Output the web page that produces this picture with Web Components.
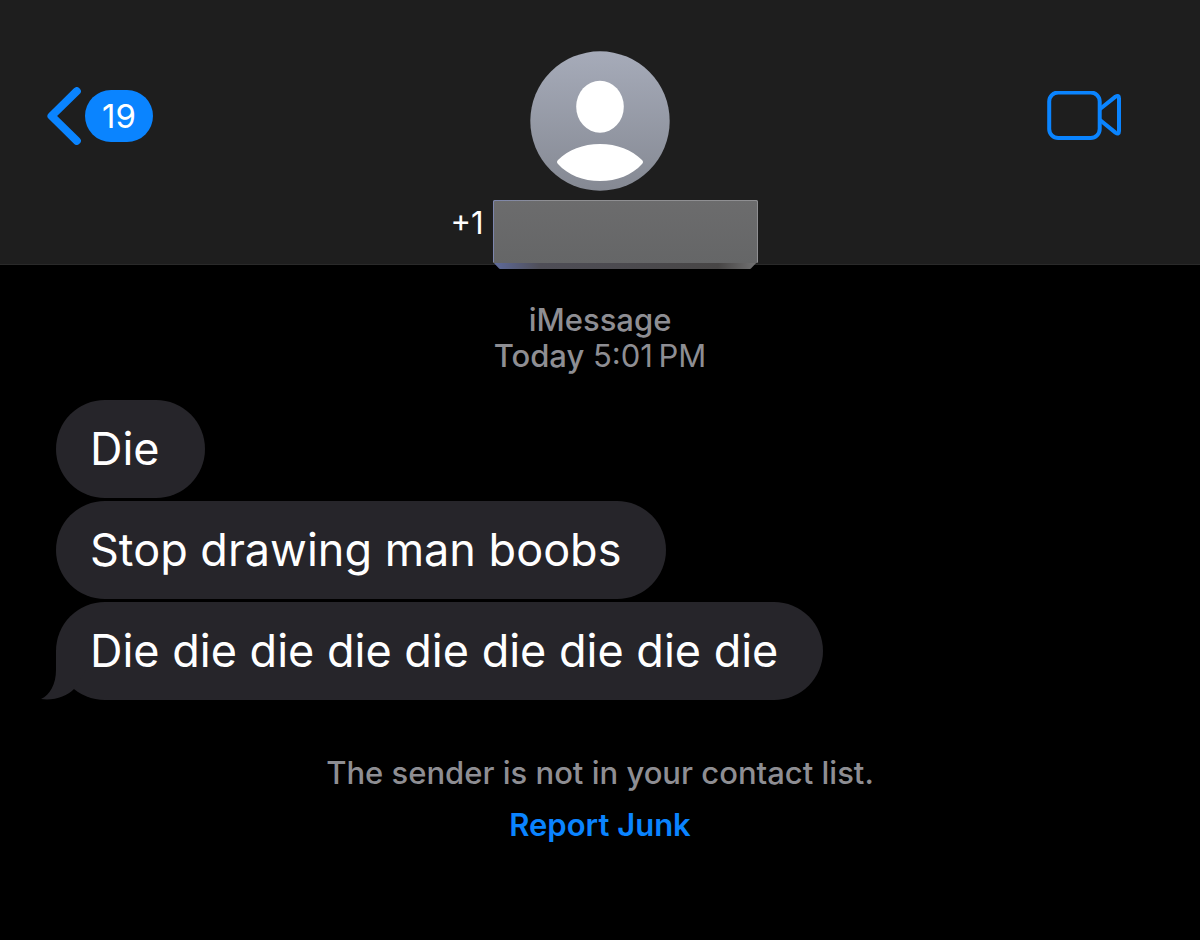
<!DOCTYPE html>
<html lang="en">
<head>
<meta charset="utf-8">
<meta name="viewport" content="width=device-width, initial-scale=1">
<title>Messages</title>
<style>
body {
  margin: 0;
  min-height: 100vh;
  background: #000;
  color: #fff;
  font-family: Inter, "Liberation Sans", sans-serif;
  --blue: #0a84ff;
  --grey: #8e8e93;
  --bubble: #26252a;
}
</style>
</head>
<body>

<chat-header count="19">+1</chat-header>
<main>
  <chat-thread>
    <chat-stamp slot="stamp" service="iMessage" day="Today">5:01&thinsp;PM</chat-stamp>
    <chat-bubble>Die</chat-bubble>
    <chat-bubble>Stop drawing man boobs</chat-bubble>
    <chat-bubble last>Die die die die die die die die die</chat-bubble>
  </chat-thread>
  <junk-notice>The sender is not in your contact list.</junk-notice>
</main>

<script>
function makeTemplate(html) {
  const template = document.createElement('template');
  template.innerHTML = html;
  return template;
}

const headerTemplate = makeTemplate(`
<style>
:host {
  display: block;
}
header {
  display: grid;
  grid-template-columns: 1fr auto 1fr;
  align-items: start;
  padding: 51px 78px 0 47px;
  background: #1e1e1e;
  border-bottom: 1px solid #2a2a2a;
}
button {
  display: flex;
  align-items: center;
  height: 58px;
  margin-top: 36px;
  padding: 0;
  border: none;
  background: none;
  font: inherit;
  color: inherit;
  cursor: pointer;
}
svg {
  display: block;
}
.back {
  gap: 4px;
}
.video {
  justify-self: end;
}
.badge {
  min-width: 68px;
  border-radius: 26px;
  background: var(--blue);
  font-size: 33px;
  line-height: 52px;
  text-align: center;
}
.contact {
  display: flex;
  flex-direction: column;
  align-items: center;
  gap: 8px;
  margin-left: 31px;
}
.number {
  display: flex;
  align-items: start;
  gap: 8px;
  padding-left: 8px;
  font-size: 31px;
  line-height: 48px;
}
/* the cover hangs a little over the edge of the header */
.cover {
  margin-bottom: -5px;
}
</style>

<header>
  <button class="back" aria-label="Back">
    <svg width="34" height="58" viewBox="0 0 34 58" fill="none" stroke="#0a84ff" stroke-width="8" stroke-linecap="round" stroke-linejoin="round">
      <path d="M29.800 4.200L4.500 29L29.800 53.800"/>
    </svg>
    <span class="badge"></span>
  </button>
  <div class="contact">
    <svg width="140" height="140" viewBox="0 0 140 140">
      <defs>
        <linearGradient id="sky" x1="0" y1="0" x2="0" y2="1">
          <stop offset="0" stop-color="#a6abb9"/>
          <stop offset="1" stop-color="#858993"/>
        </linearGradient>
      </defs>
      <circle cx="70" cy="70" r="69.7" fill="url(#sky)"/>
      <ellipse cx="70" cy="55.7" rx="23.8" ry="26" fill="#fff"/>
      <path d="M28 109C38 99 53 93 70 93S102 99 112 109Q114 111 112 113C102 124 87 130 70 130S38 124 28 113Q26 111 28 109Z" fill="#fff"/>
    </svg>
    <div class="number">
      <slot></slot>
      <svg class="cover" width="266" height="70" viewBox="0 0 266 70">
        <defs>
          <linearGradient id="face" x1="0" y1="0" x2="0" y2="1">
            <stop offset="0" stop-color="#6c6c6d"/>
            <stop offset="1" stop-color="#656667"/>
          </linearGradient>
          <linearGradient id="lip" x1="0" y1="0" x2="1" y2="0">
            <stop offset="0" stop-color="#5f6b9c"/>
            <stop offset="0.18" stop-color="#4f4e57"/>
            <stop offset="0.85" stop-color="#484646"/>
            <stop offset="1" stop-color="#747475"/>
          </linearGradient>
          <linearGradient id="rim" x1="0" y1="0" x2="1" y2="0">
            <stop offset="0" stop-color="#7d86ae"/>
            <stop offset="0.2" stop-color="#8f8f92"/>
            <stop offset="1" stop-color="#8f8f92"/>
          </linearGradient>
        </defs>
        <path d="M3 1H264Q266 1 266 3V62L259 69.500Q258 70 257 70H9Q8 70 7 69.500L1 63V3Q1 1 3 1Z" fill="url(#lip)"/>
        <path d="M3 1H264Q266 1 266 3V64H1V3Q1 1 3 1Z" fill="url(#face)"/>
        <path d="M1.500 63V3Q1.500 1.500 3 1.500H264Q265.500 1.500 265.500 3V63" fill="none" stroke="url(#rim)"/>
      </svg>
    </div>
  </div>
  <button class="video" aria-label="Video call">
    <svg width="75" height="50" viewBox="0 1 75 50" fill="none" stroke="#0a84ff" stroke-width="4" stroke-linejoin="round">
      <rect x="2.2" y="2.5" width="50.500" height="45.500" rx="9"/>
      <path d="M53 19L68.5 6.6Q72 4.5 72 8.5V41Q72 45 68.5 42.600L53 30"/>
    </svg>
  </button>
</header>
`);

class ChatHeader extends HTMLElement {
  constructor() {
    super();
    this.attachShadow({ mode: 'open' }).appendChild(headerTemplate.content.cloneNode(true));
  }

  connectedCallback() {
    this.shadowRoot.querySelector('.badge').textContent = this.getAttribute('count');
  }
}

const threadTemplate = makeTemplate(`
<style>
:host {
  display: block;
  padding: 37px 56px 0;
}
.bubbles {
  display: flex;
  flex-direction: column;
  align-items: flex-start;
  gap: 3px;
  margin-top: 26px;
}
</style>
<slot name="stamp"></slot>
<div class="bubbles"><slot></slot></div>
`);

class ChatThread extends HTMLElement {
  constructor() {
    super();
    this.attachShadow({ mode: 'open' }).appendChild(threadTemplate.content.cloneNode(true));
  }
}

const stampTemplate = makeTemplate(`
<style>
:host {
  display: block;
  color: var(--grey);
  font-size: 31px;
  line-height: 36px;
  text-align: center;
}
.service, .day {
  font-weight: 500;
}
</style>
<div class="service"></div>
<div><span class="day"></span> <slot></slot></div>
`);

class ChatStamp extends HTMLElement {
  constructor() {
    super();
    this.attachShadow({ mode: 'open' }).appendChild(stampTemplate.content.cloneNode(true));
  }

  connectedCallback() {
    this.shadowRoot.querySelector('.service').textContent = this.getAttribute('service');
    this.shadowRoot.querySelector('.day').textContent = this.getAttribute('day');
  }
}

const bubbleTemplate = makeTemplate(`
<style>
:host {
  display: block;
  position: relative;
  padding: 20px 45px 20px 34px;
  border-radius: 49px;
  background: var(--bubble);
  font-size: 45px;
  line-height: 58px;
}
.tail {
  display: none;
  position: absolute;
  left: -15px;
  bottom: 0;
}
:host([last]) .tail {
  display: block;
}
</style>
<svg class="tail" width="60" height="50" viewBox="0 0 60 50">
  <path d="M15 0V20C15 34 9 45 0 49C13 51 26 46 33 39L45 20V0Z" fill="#26252a"/>
</svg>
<slot></slot>
`);

class ChatBubble extends HTMLElement {
  constructor() {
    super();
    this.attachShadow({ mode: 'open' }).appendChild(bubbleTemplate.content.cloneNode(true));
  }
}

const noticeTemplate = makeTemplate(`
<style>
:host {
  display: flex;
  flex-direction: column;
  align-items: center;
  gap: 16px;
  padding: 55px 20px;
  color: var(--grey);
  font-size: 31px;
  font-weight: 500;
  line-height: 36px;
  text-align: center;
}
button {
  padding: 0;
  border: none;
  background: none;
  color: var(--blue);
  font: inherit;
  font-weight: 600;
  cursor: pointer;
}
</style>
<span><slot></slot></span>
<button>Report Junk</button>
`);

class JunkNotice extends HTMLElement {
  constructor() {
    super();
    this.attachShadow({ mode: 'open' }).appendChild(noticeTemplate.content.cloneNode(true));
  }
}

customElements.define('chat-header', ChatHeader);
customElements.define('chat-thread', ChatThread);
customElements.define('chat-stamp', ChatStamp);
customElements.define('chat-bubble', ChatBubble);
customElements.define('junk-notice', JunkNotice);
</script>
</body>
</html>
